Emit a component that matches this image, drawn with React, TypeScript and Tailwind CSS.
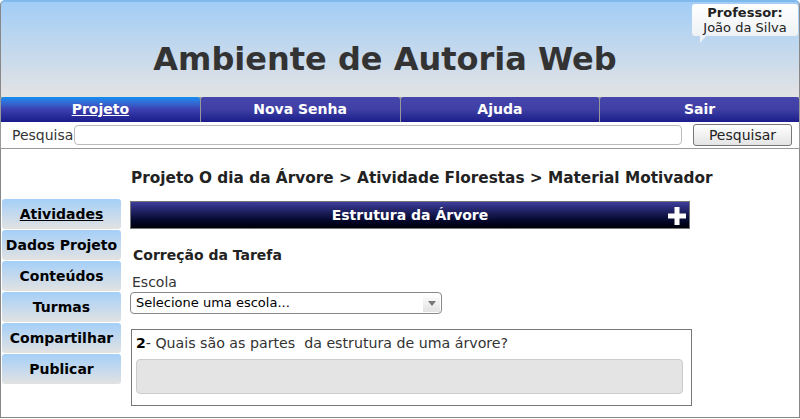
import { useState } from "react";

const tabs = ["Projeto", "Nova Senha", "Ajuda", "Sair"];
const menu = ["Atividades", "Dados Projeto", "Conteúdos", "Turmas", "Compartilhar", "Publicar"];

export default function App() {
  const [busca, setBusca] = useState("");

  return (
    <div className="w-[800px] h-[419px] bg-white overflow-hidden font-['DejaVu_Sans',Verdana,sans-serif] text-[#222]">
      {/* cabeçalho */}
      <div className="relative h-[97px] rounded-t-[5px] border-t-2 border-x border-t-[#7fb8ec] border-x-[#888] bg-gradient-to-b from-[#a2cdf6] to-[#e3e3e3] flex items-end justify-center pb-[22px]">
        <h1 className="text-[32px] font-bold text-[#333] leading-none ml-[-30px]">Ambiente de Autoria Web</h1>
        <div className="absolute right-[1px] top-[2px] w-[106px] h-[32px] rounded-[3px] bg-gradient-to-b from-white to-[#eef1f4] text-center text-[13px] leading-[15px] pt-[1px]">
          <div className="font-bold">Professor:</div>
          <div>João da Silva</div>
          <div className="absolute left-[8px] top-[31px] w-0 h-0 border-t-[8px] border-t-[#eef1f4] border-r-[7px] border-r-transparent" />
        </div>
      </div>

      {/* menu principal */}
      <div className="flex gap-px bg-[#999] h-[25px] px-px">
        {tabs.map((t, i) => (
          <a
            key={t}
            href="#"
            className={`flex-1 flex items-center justify-center rounded-t-[3px] text-white font-bold text-[14px] ${
              i === 0
                ? "underline bg-gradient-to-b from-[#0b8ff2] via-[#3b3fb0] to-[#1a1b8a]"
                : "bg-gradient-to-b from-[#4545ab] via-[#3f3fa5] to-[#1c1c8a]"
            }`}
          >
            {t}
          </a>
        ))}
      </div>

      {/* pesquisa */}
      <div className="flex items-center h-[27px] border-b border-x border-[#999] pl-[11px] pr-[7px] text-[14px]">
        <span className="text-[#333]">Pesquisa</span>
        <input
          value={busca}
          onChange={(e) => setBusca(e.target.value)}
          className="ml-[1px] w-[608px] h-[20px] border border-[#bbb] rounded-[4px] bg-white"
        />
        <button className="ml-auto w-[99px] h-[22px] border border-[#777] rounded-[3px] bg-gradient-to-b from-white to-[#e4e4e4] text-[14px] text-[#222]">
          Pesquisar
        </button>
      </div>

      {/* conteúdo */}
      <div className="flex h-[269px] border-x border-b border-[#888]">
        <div className="w-[120px] pl-px pt-[50px] flex flex-col gap-px">
          {menu.map((m, i) => (
            <a
              key={m}
              href="#"
              className={`h-[30px] flex items-center justify-center rounded-[3px] bg-gradient-to-b from-[#a4cff8] to-[#e2e2e2] font-bold text-[14px] text-black ${
                i === 0 ? "underline" : ""
              }`}
            >
              {m}
            </a>
          ))}
        </div>

        <div className="flex-1 pl-[9px] pt-[19px]">
          <h2 className="font-bold text-[15.3px] text-[#222] leading-[20px] ml-[1px]">
            Projeto O dia da Árvore &gt; Atividade Florestas &gt; Material Motivador
          </h2>

          <div className="mt-[13px] w-[560px] h-[28px] border border-[#777] bg-gradient-to-b from-[#3e3e9e] to-[#000008] flex items-center relative">
            <span className="flex-1 text-center text-white font-bold text-[14px]">Estrutura da Árvore</span>
            <svg className="absolute right-[2px] top-[4px]" width="20" height="20" viewBox="0 0 20 20">
              <rect x="7.5" y="1" width="5" height="18" fill="#fff" />
              <rect x="1" y="7.5" width="18" height="5" fill="#fff" />
            </svg>
          </div>

          <h3 className="mt-[16px] ml-[3px] font-bold text-[14px] text-[#222]">Correção da Tarefa</h3>
          <div className="mt-[8px] ml-[2px] text-[14px] text-[#333] leading-[17px]">Escola</div>
          <div className="mt-px w-[312px] h-[22px] border border-[#888] rounded-[4px] flex items-center pl-[5px] text-[13px] text-black bg-white">
            <span className="flex-1">Selecione uma escola...</span>
            <span className="w-[17px] h-[18px] mr-px bg-gradient-to-b from-white to-[#e2e2e2] flex items-center justify-center">
              <span className="w-0 h-0 border-x-[4px] border-x-transparent border-t-[5px] border-t-[#777]" />
            </span>
          </div>

          <div className="mt-[15px] ml-px w-[561px] h-[77px] border border-[#777] pl-[4px] pr-[8px] pt-[3px]">
            <div className="text-[14.2px] text-[#333] leading-[20px]">
              <b className="text-black text-[14px]">2</b>- Quais são as partes&nbsp; da estrutura de uma árvore?
            </div>
            <div className="mt-[6px] h-[35px] rounded-[4px] border border-[#ccc] bg-[#e4e4e4]" />
          </div>
        </div>
      </div>
    </div>
  );
}
